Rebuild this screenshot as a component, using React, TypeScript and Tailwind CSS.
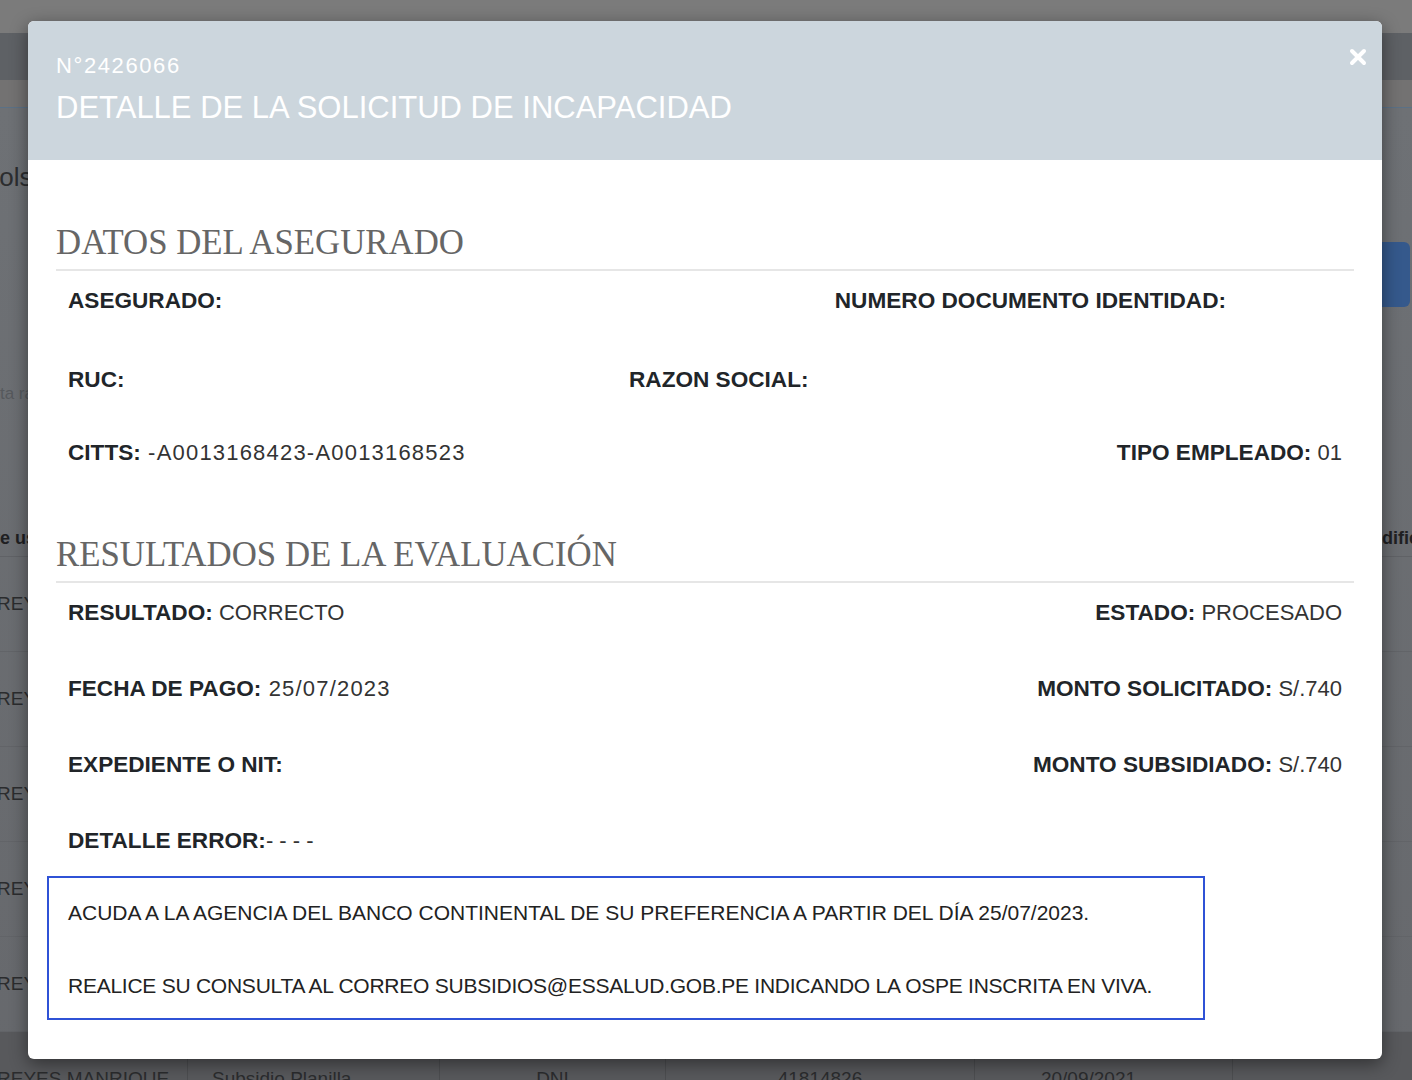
import React from 'react';

const Label: React.FC<{ text: string; value?: string; wide?: boolean; tight?: boolean }> = ({ text, value, wide, tight }) => (
  <span className="whitespace-nowrap">
    <span className="font-bold text-[22.6px] text-[#212529]">{text}</span>
    {value !== undefined && (
      <span className={`text-[22px] text-[#333333] ${wide ? 'tracking-[1.2px]' : ''}`}>
        {tight ? '' : ' '}
        {value}
      </span>
    )}
  </span>
);

const SectionTitle: React.FC<{ children: React.ReactNode; className?: string }> = ({ children, className }) => (
  <div className={className}>
    <h3 className="font-['Liberation_Serif','Times_New_Roman',serif] text-[34.8px] leading-[40px] text-[#666666]">
      {children}
    </h3>
    <div className="mt-[6px] h-[2px] bg-[#e6e6e6]" />
  </div>
);

const Row: React.FC<{ children: React.ReactNode; className?: string }> = ({ children, className }) => (
  <div className={`h-[28px] flex items-center ${className ?? 'justify-between'}`}>{children}</div>
);

const rows = [0, 1, 2, 3, 4];
const cols = 'grid grid-cols-[188px_252px_226px_309px_258px_1fr]';

export default function App() {
  return (
    <div className="relative w-[1412px] h-[1080px] overflow-hidden bg-[#6b6e72] font-['Liberation_Sans',Arial,sans-serif]">
      {/* dimmed page behind the modal */}
      <div className="h-[33px] bg-[#7b7b7b]" />
      <div className="h-[47px] bg-[#5e6165]" />
      <div className="h-[28px] bg-[#737272] border-b border-[#5b7186]" />
      <div className="bg-gradient-to-b from-[#6e7175] to-[#66686c]">
        <div className="pt-[53px] h-[85px]">
          <h1 className="ml-[-18px] text-[26px] leading-[32px] text-[#2c2d2f] whitespace-nowrap">Bolsas de subsidios</h1>
        </div>
        <div className="mt-[49px] flex justify-end">
          <div className="w-[120px] h-[65px] mr-[2px] rounded-[6px] bg-[#35598c]" />
        </div>
        <div className="mt-[77px] h-[20px] ml-[-53px] text-[17px] leading-[20px] text-[#56595d] whitespace-nowrap">Consulta rápida de solicitudes</div>
        <div className="mt-[105px]">
          <div className={`${cols} h-[48px] pt-[12px] items-center border-b border-[#606266] font-bold text-[18px] text-[#1f2022]`}>
            <div className="ml-[-58px] whitespace-nowrap">Nombre usuario</div>
            <div />
            <div />
            <div />
            <div />
            <div className="pl-[65px] whitespace-nowrap">Fecha modificación</div>
          </div>
          {rows.map((r) => (
            <div key={r} className={`${cols} h-[95px] items-center border-b border-[#626468] text-[19px] text-[#2b2c2e]`}>
              <div className="ml-[-3px] whitespace-nowrap">REYES MANRIQUE</div>
              <div className="pl-[24px]">Subsidio Planilla</div>
              <div className="text-center">DNI</div>
              <div className="text-center">41814826</div>
              <div className="text-center pr-[30px]">20/09/2021</div>
              <div />
            </div>
          ))}
          <div className={`${cols} h-[95px] bg-[#58595c] text-[19px] text-[#2b2c2e] divide-x divide-[#4d4e51]`}>
            <div className="ml-[-3px] whitespace-nowrap flex items-center">REYES MANRIQUE</div>
            <div className="pl-[24px] flex items-center">Subsidio Planilla</div>
            <div className="flex items-center justify-center">DNI</div>
            <div className="flex items-center justify-center">41814826</div>
            <div className="flex items-center justify-center pr-[30px]">20/09/2021</div>
            <div />
          </div>
        </div>
      </div>

      {/* modal */}
      <div className="absolute left-[28px] top-[21px] w-[1354px] h-[1038px] rounded-[6px] bg-white shadow-[0_5px_18px_rgba(0,0,0,0.45)]">
        <div className="relative rounded-t-[6px] bg-[#ccd6dd] px-[28px] pt-[31px] pb-[34px] text-white">
          <div className="text-[22px] leading-[28px] tracking-[1.6px]">N°2426066</div>
          <div className="mt-[10px] text-[31px] leading-[36px]">DETALLE DE LA SOLICITUD DE INCAPACIDAD</div>
          <button className="absolute right-[14px] top-[26px] w-[20px] h-[20px] flex items-center justify-center">
            <svg width="18" height="18" viewBox="0 0 18 18">
              <path d="M3 3 L15 15 M15 3 L3 15" stroke="white" strokeWidth="4" strokeLinecap="round" />
            </svg>
          </button>
        </div>

        <div className="px-[28px]">
          <SectionTitle className="pt-[63px]">DATOS DEL ASEGURADO</SectionTitle>
          <div className="px-[12px] pt-[16px] flex flex-col gap-[48px]">
            <Row>
              <Label text="ASEGURADO:" />
              <div className="pr-[116px]">
                <Label text="NUMERO DOCUMENTO IDENTIDAD:" />
              </div>
            </Row>
            <Row className="grid grid-cols-[561px_1fr]">
              <Label text="RUC:" />
              <Label text="RAZON SOCIAL:" />
            </Row>
            <Row>
              <Label text="CITTS:" value="-A0013168423-A0013168523" wide />
              <Label text="TIPO EMPLEADO:" value="01" />
            </Row>
          </div>

          <SectionTitle className="pt-[68px]">RESULTADOS DE LA EVALUACIÓN</SectionTitle>
          <div className="px-[12px] pt-[16px] flex flex-col gap-[48px]">
            <Row>
              <Label text="RESULTADO:" value="CORRECTO" />
              <Label text="ESTADO:" value="PROCESADO" />
            </Row>
            <Row>
              <Label text="FECHA DE PAGO:" value="25/07/2023" wide />
              <Label text="MONTO SOLICITADO:" value="S/.740" />
            </Row>
            <Row>
              <Label text="EXPEDIENTE O NIT:" />
              <Label text="MONTO SUBSIDIADO:" value="S/.740" />
            </Row>
            <Row>
              <Label text="DETALLE ERROR:" value="- - - -" tight />
            </Row>
          </div>

          <div className="mt-[21px] ml-[-9px] w-[1158px] border-2 border-[#2f52d6] pl-[19px] pt-[21px] pb-[18px] text-[21px] leading-[28px] text-[#222222]">
            <p>ACUDA A LA AGENCIA DEL BANCO CONTINENTAL DE SU PREFERENCIA A PARTIR DEL DÍA 25/07/2023.</p>
            <p className="mt-[45px] tracking-[-0.25px]">REALICE SU CONSULTA AL CORREO SUBSIDIOS@ESSALUD.GOB.PE INDICANDO LA OSPE INSCRITA EN VIVA.</p>
          </div>
        </div>
      </div>
    </div>
  );
}
